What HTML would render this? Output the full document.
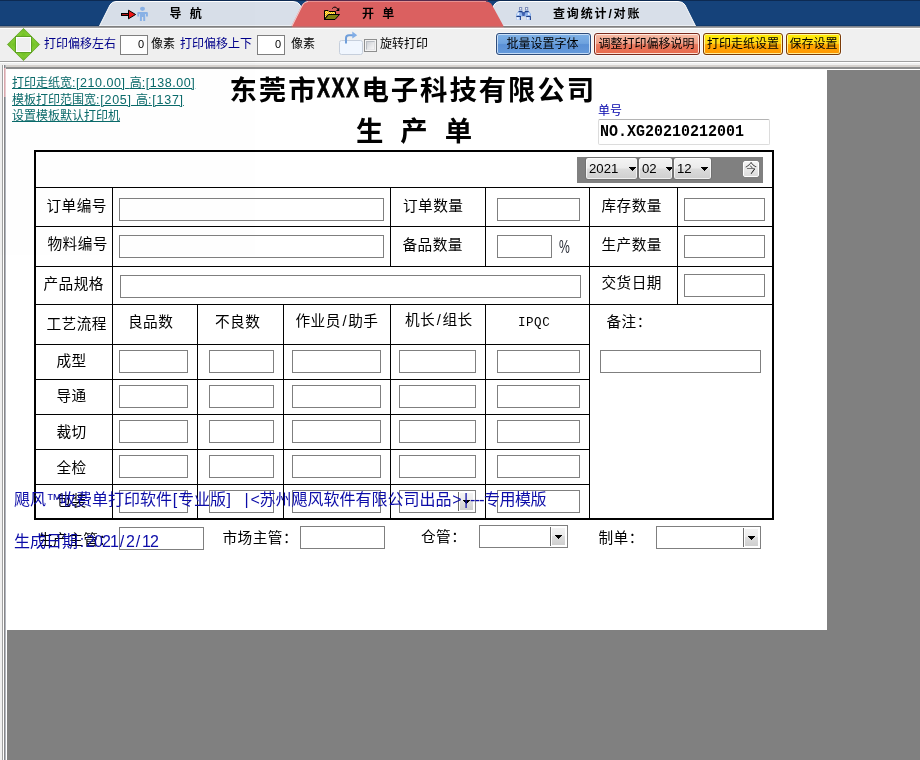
<!DOCTYPE html>
<html lang="zh-CN"><head><meta charset="utf-8"><title>生产单</title>
<style>
html,body{margin:0;padding:0}
body{width:920px;height:760px;overflow:hidden;background:#808080;position:relative;font-family:"Liberation Sans","Noto Sans CJK SC",sans-serif;font-size:12px;color:#000}
#app{position:absolute;left:0;top:0;width:920px;height:760px;overflow:hidden;will-change:transform;opacity:.999}
.a{position:absolute;white-space:nowrap}
.ln{position:absolute;background:#000}
.in{position:absolute;box-sizing:border-box;border:1px solid #7f7f7f;background:#fff}
.lb{position:absolute;white-space:nowrap;font-size:14.67px;line-height:16px;font-weight:400;color:#000;letter-spacing:.45px}
.lb i{display:inline-block;width:7.3px;text-align:center;font-style:normal;letter-spacing:0}
.t12{position:absolute;white-space:nowrap;font-size:12px;line-height:14px}
.btn{position:absolute;box-sizing:border-box;height:22px;top:33px;border-radius:3px;font-size:12px;line-height:20px;text-align:center;white-space:nowrap}
.sel{position:absolute;box-sizing:border-box;top:157px;height:23px;border:1px solid #727272;border-radius:3px;background:linear-gradient(#f4f4f4,#ebebeb 48%,#dcdcdc 52%,#cecece);box-shadow:inset 0 0 0 1px rgba(255,255,255,.7);font-size:13.2px;line-height:22px;font-weight:400}
.dd{position:absolute;box-sizing:border-box;border-left:1px solid #a0a0a0;background:linear-gradient(#f4f4f4,#d8d8d8)}
.arr{position:absolute;width:0;height:0;border-left:3.5px solid transparent;border-right:3.5px solid transparent;border-top:4px solid #000}
.lk{position:absolute;white-space:nowrap;font-size:12px;line-height:14px;color:#0a6a6a;text-decoration:underline}
.wm{position:absolute;white-space:nowrap;font-size:16px;line-height:18px;color:#0c0ca8;font-weight:400}
.wm span{display:inline-block;text-align:center}
</style></head>
<body>
<div id="app">
<div class="a" style="left:0;top:0;width:920px;height:27px;background:#15427a"></div>
<div class="a" style="left:0;top:0;width:920px;height:1px;background:#0d2a52"></div>
<svg class="a" style="left:0;top:0" width="920" height="28" viewBox="0 0 920 28">
<rect x="0" y="25" width="920" height="1" fill="#123a6a"/>
<path d="M99.5 26 L110 5 Q112 1.5 116 1.5 L293 1.5 Q298 1.5 300 5 L311 26 Z" fill="#d8dfe9" stroke="#fff" stroke-width="1"/>
<path d="M485 26 L494 5 Q496 1.5 500 1.5 L678 1.5 Q683 1.5 685 5 L695.5 26 Z" fill="#d8dfe9" stroke="#fff" stroke-width="1"/>
<rect x="0" y="26" width="920" height="1" fill="#7e8490"/>
<rect x="100" y="26" width="211" height="1" fill="#808080"/>
<rect x="485" y="26" width="211" height="1" fill="#808080"/>
<rect x="0" y="27" width="920" height="1" fill="#a0a0a0"/>
<path d="M291.5 26 L302 5 Q304 1.5 308 1.5 L486 1.5 Q490 1.5 492 5 L503.5 26 Z" fill="#db6060"/>
<path d="M292 26 L302.5 5 Q304.5 1.5 308 1.5" fill="none" stroke="#f6d6d6" stroke-width="1"/>
<path d="M308 1.5 L486 1.5" stroke="#e89090" stroke-width="1"/>
<rect x="306" y="0" width="182" height="1" fill="#582a4c"/>
<rect x="292" y="26" width="211" height="1" fill="#be6a6a"/>
<rect x="292" y="27" width="212" height="1" fill="#c29c9c"/>
<!-- nav icon: arrow + person -->
<rect x="121" y="13" width="9" height="3" fill="#000"/>
<rect x="122" y="14" width="8" height="1" fill="#b01818"/>
<path d="M128.5 10.2 L135.6 14.5 L128.5 18.8 Z" fill="#f21414" stroke="#000" stroke-width="1" stroke-linejoin="miter"/>
<ellipse cx="142.5" cy="8.8" rx="2.5" ry="2.1" fill="#8ab2e6"/>
<path d="M138.3 12 H146.9 Q147.9 12 147.9 13 V16.6 H146 V14 H145.2 V21 H143.2 V17 H141.9 V21 H139.9 V14 H139.1 V16.6 H137.3 V13 Q137.3 12 138.3 12 Z" fill="#8ab2e6"/>
<!-- folder icon -->
<defs><pattern id="chk" width="2" height="2" patternUnits="userSpaceOnUse"><rect width="2" height="2" fill="#ffe870"/><rect width="1" height="1" fill="#f0b000"/><rect x="1" y="1" width="1" height="1" fill="#f0b000"/></pattern></defs>
<path d="M324.5 19.5 V10.5 H328 L329 11.5 H335.5 V14.5 H328 Z" fill="url(#chk)" stroke="#000" stroke-width="1"/>
<path d="M324.5 19.5 L328.5 14.5 H339.5 L335 19.5 Z" fill="#808010" stroke="#000" stroke-width="1"/>
<path d="M332.2 8.6 Q335 5.2 338 9.3" fill="none" stroke="#000" stroke-width="1"/>
<path d="M339.3 7.6 V11 H335.9 Z" fill="#000"/>
<!-- binoculars -->
<g>
<rect x="519.5" y="7.5" width="2.2" height="2.5" fill="#eef2fc" stroke="#7f8fba" stroke-width="1"/>
<rect x="525.5" y="7.5" width="2.2" height="2.5" fill="#eef2fc" stroke="#7f8fba" stroke-width="1"/>
<path d="M519 10.5 H522.5 L523.5 16.5 H516.3 V14 Z" fill="#8cb0ea"/>
<path d="M525 10.5 H528.5 L531 14 V16.5 H524 Z" fill="#8cb0ea"/>
<path d="M521.5 12 H525.5 L524.5 16 H522.5 Z" fill="#3f62b0"/>
<path d="M518.6 11.6 H522.4 M524.8 11.6 H528.6" stroke="#1e3f86" stroke-width="1.1"/>
<path d="M517.5 13 L519.5 12.3 L519 15 L517 15.2 Z M527.8 12.3 L529.6 13.2 L529.8 15 L528 15 Z" fill="#e6effc"/>
<rect x="516.4" y="16.4" width="4.6" height="3.5" fill="#a9c4f2"/>
<rect x="526.2" y="16.4" width="4.6" height="3.5" fill="#a9c4f2"/>
<path d="M516.4 16.5 H521 M526.2 16.5 H530.8" stroke="#1e3f86" stroke-width="1.2"/>
<rect x="517" y="17.3" width="1.8" height="2.2" fill="#f2f6fe"/>
<rect x="526.9" y="17.3" width="1.8" height="2.2" fill="#f2f6fe"/>
<path d="M520.5 17 V20 M530.5 17 V20" stroke="#2a4c96" stroke-width="1"/>
</g>
</svg>
<div class="a" style="left:169.5px;top:7px;font-weight:700;font-size:12px;line-height:14px;letter-spacing:1px"><span style="word-spacing:3px">导 航</span></div>
<div class="a" style="left:362px;top:7px;font-weight:700;font-size:12px;line-height:14px;letter-spacing:1px"><span style="word-spacing:3px">开 单</span></div>
<div class="a" style="left:553px;top:7px;font-weight:700;font-size:12px;line-height:14px;letter-spacing:1px;letter-spacing:1.85px">查询统计/对账</div>
<div class="a" style="left:0;top:28px;width:920px;height:1px;background:#fff"></div>
<div class="a" style="left:0;top:29px;width:920px;height:32px;background:#f0f0f0"></div>
<div class="a" style="left:0;top:61px;width:920px;height:1px;background:#a0a0a0"></div>
<div class="a" style="left:0;top:62px;width:920px;height:1px;background:#fff"></div>
<div class="a" style="left:0;top:63px;width:920px;height:2px;background:#f0f0f0"></div>
<svg class="a" style="left:5px;top:26px" width="38" height="37" viewBox="5 26 38 37">
<defs><radialGradient id="gg" cx=".5" cy=".5" r=".5"><stop offset="0" stop-color="#8ad636"/><stop offset=".75" stop-color="#7cc82e"/><stop offset="1" stop-color="#70b828"/></radialGradient></defs>
<path d="M23.5 28.4 L39.6 44.5 L23.5 60.6 L7.4 44.5 Z" fill="url(#gg)" stroke="#62a526" stroke-width=".8"/>
<path d="M23.5 33 L26.5 36 H20.5 Z M23.5 56 L26.5 53 H20.5 Z M12 44.5 L15 41.5 V47.5 Z M35 44.5 L32 41.5 V47.5 Z" fill="#6fc024" opacity=".7"/>
<rect x="15" y="36" width="17" height="17" fill="#5fa324"/>
<rect x="16" y="37" width="15" height="15" fill="#ffffff"/>
<rect x="17" y="38" width="13" height="13" fill="#f0f0f0"/>
</svg>
<div class="t12" style="left:44px;top:37px;color:#00008b">打印偏移左右</div>
<div class="in" style="left:120px;top:35px;width:28px;height:20px;font-size:11px;line-height:16px;text-align:right;padding-right:3px">0</div>
<div class="t12" style="left:151px;top:37px">像素</div>
<div class="t12" style="left:180px;top:37px;color:#00008b">打印偏移上下</div>
<div class="in" style="left:257px;top:35px;width:28px;height:20px;font-size:11px;line-height:16px;text-align:right;padding-right:3px">0</div>
<div class="t12" style="left:291px;top:37px">像素</div>
<svg class="a" style="left:338px;top:30px" width="26" height="26" viewBox="338 30 26 26">
<rect x="339.5" y="40.5" width="23" height="14" rx="2" fill="#f0f6fe" stroke="#c6cfdc" stroke-width="1"/>
<path d="M346 43.5 V38 Q346 35.2 349 35.2 H353" fill="none" stroke="#6f9eda" stroke-width="2"/>
<path d="M352.3 31.6 L357.2 35.2 L352.3 38.6 Z" fill="#82aee6"/>
</svg>
<div class="a" style="left:364px;top:39px;width:13px;height:13px;box-sizing:border-box;border:1px solid #8e8f8f;background:#f4f4f4"><div style="position:absolute;left:1px;top:1px;width:9px;height:9px;box-sizing:border-box;border:1px solid #b8bcc2;border-right-color:#dedfe1;border-bottom-color:#e6e6e8;background:linear-gradient(135deg,#cdd0d5,#e6e7e9 55%,#f6f6f6)"></div></div>
<div class="t12" style="left:380px;top:37px">旋转打印</div>
<div class="btn" style="left:496px;width:95px;border:1px solid #2e4c7a;background:linear-gradient(#80b2e6,#6ea2de 47%,#5a90d6 53%,#6499da);box-shadow:inset 0 0 0 1px rgba(214,232,250,.85),0 0 0 1px rgba(255,255,255,.55);padding-right:2px">批量设置字体</div>
<div class="btn" style="left:594px;width:106px;border:1px solid #7a2a1c;background:linear-gradient(#f6bca6,#f0a088 47%,#e87a60 53%,#e8684a);box-shadow:inset 0 0 0 1px rgba(255,238,230,.9),0 0 0 1px rgba(255,255,255,.55);padding-right:1px">调整打印偏移说明</div>
<div class="btn" style="left:703px;width:80px;border:1px solid #7a3a08;background:linear-gradient(#fff000,#ffd61e 47%,#ffa800 53%,#ff9600);box-shadow:inset 0 0 0 1px rgba(255,246,170,.9),0 0 0 1px rgba(255,255,255,.55);">打印走纸设置</div>
<div class="btn" style="left:786px;width:55px;border:1px solid #7a3a08;background:linear-gradient(#fff000,#ffd61e 47%,#ffa800 53%,#ff9600);box-shadow:inset 0 0 0 1px rgba(255,246,170,.9),0 0 0 1px rgba(255,255,255,.55);">保存设置</div>
<div class="a" style="left:0;top:65px;width:920px;height:695px;background:#f0f0f0"></div>
<div class="a" style="left:2px;top:65px;width:918px;height:2px;background:#d6d2ce"></div>
<div class="a" style="left:2px;top:65px;width:1px;height:695px;background:#a0a0a0"></div>
<div class="a" style="left:3px;top:65px;width:1px;height:695px;background:#fff"></div>
<div class="a" style="left:4px;top:67px;width:916px;height:2px;background:#8e8e8e"></div>
<div class="a" style="left:4px;top:65px;width:1px;height:695px;background:#868688"></div>
<div class="a" style="left:5px;top:65px;width:1px;height:695px;background:#b2b6be"></div>
<div class="a" style="left:4px;top:68px;width:1px;height:29px;background:#d9a9ae"></div>
<div class="a" style="left:5px;top:68px;width:1px;height:29px;background:#e9cbcf"></div>
<div class="a" style="left:6px;top:69px;width:914px;height:691px;background:#fff"></div>
<div class="a" style="left:827px;top:70px;width:93px;height:690px;background:#808080"></div>
<div class="a" style="left:7px;top:630px;width:913px;height:130px;background:#808080"></div>
<div class="lk" style="left:12px;top:76px">打印走纸宽<span style="letter-spacing:.55px;font-size:12.5px">:[210.00] </span>高<span style="letter-spacing:.55px;font-size:12.5px">:[138.00]</span></div>
<div class="lk" style="left:12px;top:93px">模板打印范围宽<span style="letter-spacing:.75px;font-size:12.5px">:[205] </span>高<span style="letter-spacing:.75px;font-size:12.5px">:[137]</span></div>
<div class="lk" style="left:12px;top:109.4px">设置模板默认打印机</div>
<div class="a" style="left:229.5px;top:71.5px;font-size:27.4px;letter-spacing:1.93px;line-height:38px;font-weight:700">东莞市<span style="display:inline-block;width:44px;height:30px;vertical-align:bottom;position:relative;letter-spacing:0"><span style="position:absolute;left:-.5px;top:-10.5px;display:inline-block;transform:scaleX(.7);transform-origin:0 0;-webkit-text-stroke:.8px #000;font-family:&quot;Liberation Sans&quot;,sans-serif;font-size:27.5px;line-height:38px;letter-spacing:2.6px">XXX</span></span>电子科技有限公司</div>
<div class="a" style="left:356px;top:113px;font-size:27.4px;letter-spacing:1.93px;line-height:38px;font-weight:700"><span style="word-spacing:5.5px">生 产 单</span></div>
<div class="t12" style="left:598px;top:104px;color:#0000aa">单号</div>
<div class="a" style="left:598px;top:119px;width:172px;height:26px;box-sizing:border-box;border:1px solid #dcdcdc;border-top-color:#b4b4b4;border-radius:2px;background:#fff;font-family:&quot;Liberation Mono&quot;,monospace;font-weight:700;font-size:15px;line-height:25px;padding-left:1px"><span style="display:inline-block;transform:scaleY(1.1);transform-origin:50% 62%">NO.XG20210212001</span></div>
<div class="a" style="left:34px;top:150px;width:740px;height:370px;box-sizing:border-box;border:2px solid #000"></div>
<div class="ln" style="left:36px;top:187px;width:736px;height:1px"></div>
<div class="ln" style="left:36px;top:226px;width:736px;height:1px"></div>
<div class="ln" style="left:36px;top:266px;width:736px;height:1px"></div>
<div class="ln" style="left:36px;top:304px;width:736px;height:1px"></div>
<div class="ln" style="left:36px;top:344px;width:554px;height:1px"></div>
<div class="ln" style="left:36px;top:379px;width:554px;height:1px"></div>
<div class="ln" style="left:36px;top:414px;width:554px;height:1px"></div>
<div class="ln" style="left:36px;top:449px;width:554px;height:1px"></div>
<div class="ln" style="left:36px;top:484px;width:554px;height:1px"></div>
<div class="ln" style="left:112px;top:187px;width:1px;height:331px"></div>
<div class="ln" style="left:197px;top:304px;width:1px;height:214px"></div>
<div class="ln" style="left:283px;top:304px;width:1px;height:214px"></div>
<div class="ln" style="left:390px;top:187px;width:1px;height:79px"></div>
<div class="ln" style="left:390px;top:304px;width:1px;height:214px"></div>
<div class="ln" style="left:485px;top:187px;width:1px;height:79px"></div>
<div class="ln" style="left:485px;top:304px;width:1px;height:214px"></div>
<div class="ln" style="left:589px;top:187px;width:1px;height:331px"></div>
<div class="ln" style="left:677px;top:187px;width:1px;height:117px"></div>
<div class="a" style="left:577px;top:157px;width:186px;height:26px;background:#808080"></div>
<div class="sel" style="left:585px;width:53px;padding-left:3px;overflow:hidden">2021<svg style="position:absolute;left:43px;top:9px" width="7" height="4" viewBox="0 0 7 4" shape-rendering="crispEdges"><path d="M0 0H7V1H6V2H5V3H4V4H3V3H2V2H1V1H0Z" fill="#000"/></svg></div>
<div class="sel" style="left:638px;width:35px;padding-left:3px;overflow:hidden">02<svg style="position:absolute;left:27px;top:9px" width="7" height="4" viewBox="0 0 7 4" shape-rendering="crispEdges"><path d="M0 0H7V1H6V2H5V3H4V4H3V3H2V2H1V1H0Z" fill="#000"/></svg></div>
<div class="sel" style="left:673px;width:39px;padding-left:3px;overflow:hidden">12<svg style="position:absolute;left:27px;top:9px" width="7" height="4" viewBox="0 0 7 4" shape-rendering="crispEdges"><path d="M0 0H7V1H6V2H5V3H4V4H3V3H2V2H1V1H0Z" fill="#000"/></svg></div>
<div class="a" style="left:743px;top:161px;width:16px;height:16px;box-sizing:border-box;border:1px solid #fff;border-radius:2px;background:linear-gradient(#f4f4f4,#dcdcdc);font-size:12px;line-height:14px;text-align:center;font-weight:300">今</div>
<div class="in" style="left:119px;top:198px;width:265px;height:23px"></div>
<div class="in" style="left:497px;top:198px;width:83px;height:23px"></div>
<div class="in" style="left:684px;top:198px;width:81px;height:23px"></div>
<div class="in" style="left:119px;top:235px;width:265px;height:23px"></div>
<div class="in" style="left:497px;top:235px;width:55px;height:23px"></div>
<div class="in" style="left:684px;top:235px;width:81px;height:23px"></div>
<div class="in" style="left:120px;top:275px;width:461px;height:23px"></div>
<div class="in" style="left:684px;top:274px;width:81px;height:23px"></div>
<div class="in" style="left:119px;top:350px;width:69px;height:23px"></div>
<div class="in" style="left:209px;top:350px;width:65px;height:23px"></div>
<div class="in" style="left:292px;top:350px;width:89px;height:23px"></div>
<div class="in" style="left:399px;top:350px;width:77px;height:23px"></div>
<div class="in" style="left:497px;top:350px;width:83px;height:23px"></div>
<div class="in" style="left:119px;top:385px;width:69px;height:23px"></div>
<div class="in" style="left:209px;top:385px;width:65px;height:23px"></div>
<div class="in" style="left:292px;top:385px;width:89px;height:23px"></div>
<div class="in" style="left:399px;top:385px;width:77px;height:23px"></div>
<div class="in" style="left:497px;top:385px;width:83px;height:23px"></div>
<div class="in" style="left:119px;top:420px;width:69px;height:23px"></div>
<div class="in" style="left:209px;top:420px;width:65px;height:23px"></div>
<div class="in" style="left:292px;top:420px;width:89px;height:23px"></div>
<div class="in" style="left:399px;top:420px;width:77px;height:23px"></div>
<div class="in" style="left:497px;top:420px;width:83px;height:23px"></div>
<div class="in" style="left:119px;top:455px;width:69px;height:23px"></div>
<div class="in" style="left:209px;top:455px;width:65px;height:23px"></div>
<div class="in" style="left:292px;top:455px;width:89px;height:23px"></div>
<div class="in" style="left:399px;top:455px;width:77px;height:23px"></div>
<div class="in" style="left:497px;top:455px;width:83px;height:23px"></div>
<div class="in" style="left:119px;top:490px;width:69px;height:23px"></div>
<div class="in" style="left:209px;top:490px;width:65px;height:23px"></div>
<div class="in" style="left:292px;top:490px;width:89px;height:23px"></div>
<div class="in" style="left:399px;top:490px;width:77px;height:23px"></div>
<div class="in" style="left:497px;top:490px;width:83px;height:23px"></div>
<div class="in" style="left:600px;top:350px;width:161px;height:23px"></div>
<div class="a" style="left:458px;top:492px;width:1px;height:19px;background:#6e6e6e"></div>
<div class="a" style="left:460px;top:493px;width:13px;height:17px;background:linear-gradient(#f3f3f3,#ebebeb 46%,#dddddd 50%,#cfcfcf)"></div>
<svg class="a" style="left:463px;top:500px" width="7" height="4" viewBox="0 0 7 4" shape-rendering="crispEdges"><path d="M0 0H7V1H6V2H5V3H4V4H3V3H2V2H1V1H0Z" fill="#000"/></svg>
<div class="lb" style="left:46.5px;top:198px;">订单编号</div>
<div class="lb" style="left:47.5px;top:236px;">物料编号</div>
<div class="lb" style="left:43.5px;top:276px;">产品规格</div>
<div class="lb" style="left:46.5px;top:316px;">工艺流程</div>
<div class="lb" style="left:56.5px;top:352.5px;">成型</div>
<div class="lb" style="left:56.5px;top:387.5px;">导通</div>
<div class="lb" style="left:56.5px;top:423.5px;">裁切</div>
<div class="lb" style="left:56.5px;top:460px;">全检</div>
<div class="lb" style="left:56.5px;top:492.5px;">包装</div>
<div class="lb" style="left:128px;top:314px;">良品数</div>
<div class="lb" style="left:215px;top:314px;">不良数</div>
<div class="lb" style="left:295.5px;top:312.5px;">作业员<i>/</i>助手</div>
<div class="lb" style="left:405px;top:312px;">机长<i>/</i>组长</div>
<div class="lb" style="left:518px;top:315px;font-family:&quot;Liberation Mono&quot;,monospace;font-size:12.6px;font-weight:400;letter-spacing:.5px">IPQC</div>
<div class="lb" style="left:403px;top:198px;">订单数量</div>
<div class="lb" style="left:402.5px;top:237px;">备品数量</div>
<div class="a" style="left:558.5px;top:235.5px;font-size:19px;line-height:21px;color:#2a2e38;transform:scaleX(.64);transform-origin:0 0">%</div>
<div class="lb" style="left:601.5px;top:198px;">库存数量</div>
<div class="lb" style="left:601.5px;top:237px;">生产数量</div>
<div class="lb" style="left:601.5px;top:275px;">交货日期</div>
<div class="lb" style="left:606.5px;top:314px;">备注：</div>
<div class="lb" style="left:38px;top:531.5px;">生产主管：</div>
<div class="in" style="left:119px;top:527px;width:85px;height:23px"></div>
<div class="lb" style="left:222.5px;top:530px;">市场主管：</div>
<div class="in" style="left:300px;top:526px;width:85px;height:23px"></div>
<div class="lb" style="left:421px;top:529px;">仓管：</div>
<div class="in" style="left:479px;top:525px;width:89px;height:23px"></div>
<div class="a" style="left:550px;top:527px;width:1px;height:19px;background:#6e6e6e"></div>
<div class="a" style="left:552px;top:528px;width:13px;height:17px;background:linear-gradient(#f3f3f3,#ebebeb 46%,#dddddd 50%,#cfcfcf)"></div>
<svg class="a" style="left:555px;top:535px" width="7" height="4" viewBox="0 0 7 4" shape-rendering="crispEdges"><path d="M0 0H7V1H6V2H5V3H4V4H3V3H2V2H1V1H0Z" fill="#000"/></svg>
<div class="lb" style="left:598.5px;top:530px;">制单：</div>
<div class="in" style="left:656px;top:526px;width:105px;height:23px"></div>
<div class="a" style="left:743px;top:528px;width:1px;height:19px;background:#6e6e6e"></div>
<div class="a" style="left:745px;top:529px;width:13px;height:17px;background:linear-gradient(#f3f3f3,#ebebeb 46%,#dddddd 50%,#cfcfcf)"></div>
<svg class="a" style="left:748px;top:536px" width="7" height="4" viewBox="0 0 7 4" shape-rendering="crispEdges"><path d="M0 0H7V1H6V2H5V3H4V4H3V3H2V2H1V1H0Z" fill="#000"/></svg>
<div class="wm" style="left:14px;top:491px">飓风<span style="width:14px">™</span>收费单打印软件<span style="width:6px">[</span>专业版<span style="width:5.5px">]</span><span style="width:11px"> </span><span style="width:8px">|</span><span style="width:9px">&lt;</span>苏州飓风软件有限公司出品<span style="width:10.5px">&gt;</span><span style="width:8px">|</span><span style="width:14px;letter-spacing:-.7px">---</span><span style="letter-spacing:-.5px">专用模版</span></div>
<div class="wm" style="left:14px;top:532.5px">生成日期<span style="width:8px">:</span><span style="letter-spacing:-.9px">2021</span><span style="width:8px">/</span><span style="letter-spacing:-.9px">2</span><span style="width:8px">/</span><span style="letter-spacing:-.9px">12</span></div>
</div>
</body></html>
